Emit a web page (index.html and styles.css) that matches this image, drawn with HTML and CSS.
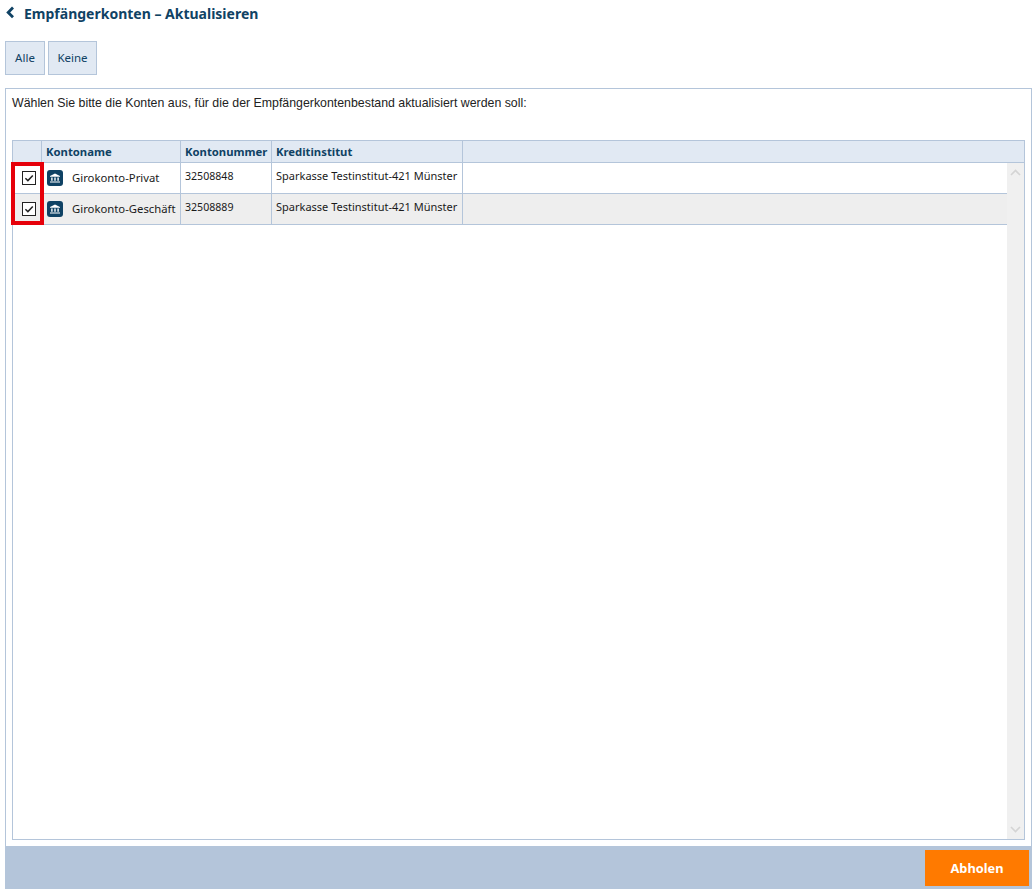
FILE: index.html
```html
<!DOCTYPE html>
<html lang="de">
<head>
<meta charset="utf-8">
<title>Empfängerkonten – Aktualisieren</title>
<link rel="stylesheet" href="styles.css">
</head>
<body>
<div class="page">
  <header class="title">
    <svg class="back" width="10" height="14" viewBox="0 0 10 14"><path d="M8 2.6 L3.2 7.4 L8 12.2" fill="none" stroke="#0f4264" stroke-width="2.8"/></svg>
    <h1>Empfängerkonten – Aktualisieren</h1>
  </header>
  <div class="actions">
    <button class="btn btn-alle">Alle</button>
    <button class="btn btn-keine">Keine</button>
  </div>
  <main class="panel">
    <p class="intro">Wählen Sie bitte die Konten aus, für die der Empfängerkontenbestand aktualisiert werden soll:</p>
    <div class="grid">
      <div class="row head">
        <div class="cell c-check"></div>
        <div class="cell c-name">Kontoname</div>
        <div class="cell c-num">Kontonummer</div>
        <div class="cell c-inst">Kreditinstitut</div>
        <div class="cell c-rest"></div>
      </div>
      <div class="body">
        <div class="rows">
          <div class="row item">
            <div class="cell c-check"><span class="check"><svg width="12" height="12" viewBox="0 0 12 12"><path d="M2.4 6.3 L4.9 8.6 L9.8 3.6" fill="none" stroke="#222" stroke-width="1.5"/></svg></span></div>
            <div class="cell c-name"><svg class="bank" width="16" height="16" viewBox="0 0 16 16"><rect width="16" height="16" rx="3" fill="#0f4264"/><path d="M3 6 L8 3.5 L13 6 V6.8 H3 Z M4.2 7.6 H5.6 V10.8 H4.2 Z M7.3 7.6 H8.7 V10.8 H7.3 Z M10.4 7.6 H11.8 V10.8 H10.4 Z M3 11.4 H13 V12.6 H3 Z" fill="#fff"/></svg><span class="name-text">Girokonto-Privat</span></div>
            <div class="cell c-num top">32508848</div>
            <div class="cell c-inst top">Sparkasse Testinstitut-421 Münster</div>
            <div class="cell c-rest"></div>
          </div>
          <div class="row item alt">
            <div class="cell c-check"><span class="check"><svg width="12" height="12" viewBox="0 0 12 12"><path d="M2.4 6.3 L4.9 8.6 L9.8 3.6" fill="none" stroke="#222" stroke-width="1.5"/></svg></span></div>
            <div class="cell c-name"><svg class="bank" width="16" height="16" viewBox="0 0 16 16"><rect width="16" height="16" rx="3" fill="#0f4264"/><path d="M3 6 L8 3.5 L13 6 V6.8 H3 Z M4.2 7.6 H5.6 V10.8 H4.2 Z M7.3 7.6 H8.7 V10.8 H7.3 Z M10.4 7.6 H11.8 V10.8 H10.4 Z M3 11.4 H13 V12.6 H3 Z" fill="#fff"/></svg><span class="name-text">Girokonto-Geschäft</span></div>
            <div class="cell c-num top">32508889</div>
            <div class="cell c-inst top">Sparkasse Testinstitut-421 Münster</div>
            <div class="cell c-rest"></div>
          </div>
        </div>
        <div class="scrollbar">
          <svg width="11" height="7" viewBox="0 0 11 7"><path d="M1 6 L5.5 1.5 L10 6" fill="none" stroke="#d4d4d4" stroke-width="1.6"/></svg>
          <svg width="11" height="7" viewBox="0 0 11 7"><path d="M1 1 L5.5 5.5 L10 1" fill="none" stroke="#d4d4d4" stroke-width="1.6"/></svg>
        </div>
      </div>
      <div class="highlight"></div>
    </div>
  </main>
  <footer class="footer">
    <button class="submit">Abholen</button>
  </footer>
</div>
</body>
</html>
```
FILE: styles.css
```css
* { box-sizing: border-box; }
html, body { margin: 0; padding: 0; background: #fff; }
body { font-family: "Noto Sans", "Open Sans", sans-serif; color: #1a1a1a; }
.page { width: 1035px; height: 891px; padding: 0 3px 2px 5px; display: flex; flex-direction: column; }
.title { height: 41px; display: flex; align-items: flex-start; padding-top: 4px; }
.back { margin-top: 1px; flex: none; }
.title h1 { margin: 0 0 0 9px; font-size: 14px; line-height: 19px; font-weight: 700; color: #0f4264; }
.actions { display: flex; gap: 3px; height: 47px; align-items: flex-start; }
.btn { height: 34px; padding: 0 0 2px; background: #e1e9f3; border: 1px solid #b4c5da; font: 11.5px "Noto Sans", sans-serif; color: #0f4264; }
.btn-alle { width: 40px; }
.btn-keine { width: 49px; }
.panel { flex: 1; min-height: 0; border: 1px solid #b4c5da; border-bottom: 0; padding: 0 6px 6px 6px; display: flex; flex-direction: column; }
.intro { margin: 0; height: 51px; padding-top: 7px; font: 12.35px/14px "Liberation Sans", Arial, sans-serif; color: #222; }
.grid { position: relative; flex: 1; min-height: 0; border: 1px solid #b4c5da; display: flex; flex-direction: column; }
.row { display: flex; }
.head { height: 22px; background: #e1e9f3; border-bottom: 1px solid #b4c5da; font-size: 11.3px; font-weight: 700; color: #0f4264; }
.head .cell { line-height: 21px; padding-left: 4px; }
.cell { border-right: 1px solid #b4c5da; flex: none; }
.c-check { width: 29px; }
.c-name { width: 139px; }
.c-num { width: 91px; }
.c-inst { width: 191px; }
.c-rest { flex: 1; border-right: 0; }
.head .c-check { padding: 0; }
.body { flex: 1; min-height: 0; display: flex; }
.rows { flex: 1; min-width: 0; }
.item { height: 31px; border-bottom: 1px solid #b4c5da; font-size: 11px; color: #1a1a1a; background: #fff; }
.item.alt { background: #eeeeee; }
.item .cell { display: flex; align-items: center; }
.item .c-check { justify-content: center; padding-left: 4px; padding-bottom: 1px; }
.item .c-name { padding-left: 5px; gap: 9px; }
.name-text { font-size: 11.3px; line-height: 16px; margin-top: -1px; }
.item .top { align-items: flex-start; padding-left: 4px; padding-top: 5px; line-height: 16px; }
.item .c-num { font-size: 10.6px; }
.check { width: 14px; height: 14px; border: 1px solid #222; background: #fff; display: flex; align-items: center; justify-content: center; }
.bank { flex: none; }
.scrollbar { width: 17px; flex: none; background: #f0f0f0; display: flex; flex-direction: column; justify-content: space-between; align-items: center; padding: 6px 0; }
.highlight { position: absolute; left: -2px; top: 21px; width: 33px; height: 63px; border: 4px solid #e6000a; }
.footer { height: 43px; flex: none; background: #b4c5da; display: flex; justify-content: flex-end; align-items: flex-start; padding: 4px 3px 0 0; }
.submit { width: 104px; height: 36px; border: 0; padding: 0; background: #ff7a00; color: #fff; font: 700 12.8px "Noto Sans", sans-serif; }
```
